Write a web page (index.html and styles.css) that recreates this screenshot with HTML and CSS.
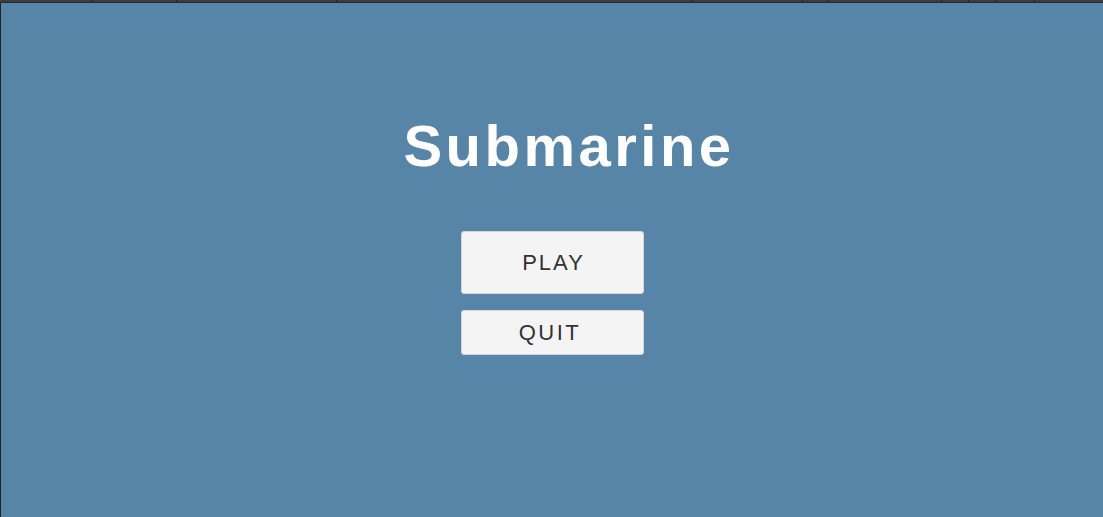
FILE: index.html
```html
<!DOCTYPE html>
<html lang="en">
<head>
<meta charset="utf-8">
<title>Submarine</title>
<link rel="stylesheet" href="styles.css">
</head>
<body>
<div class="toolbar">
  <span class="seg" style="width:92px"></span>
  <span class="seg" style="width:85px"></span>
  <span class="seg" style="width:160px"></span>
  <span class="seg" style="width:355px"></span>
  <span class="seg" style="width:111px"></span>
  <span class="seg" style="width:26px"></span>
  <span class="seg" style="width:113px"></span>
  <span class="seg" style="width:27px"></span>
  <span class="seg" style="width:27px"></span>
  <span class="seg" style="width:39px"></span>
  <span class="seg seg-last"></span>
</div>
<div class="viewport">
  <div class="edge"></div>
  <main class="menu">
    <h1 class="title">Submarine</h1>
    <div class="buttons">
      <button class="btn btn-play">PLAY</button>
      <button class="btn btn-quit">QUIT</button>
    </div>
  </main>
</div>
</body>
</html>
```

FILE: styles.css
```css
html, body {
  margin: 0;
  padding: 0;
  height: 100%;
}
body {
  background: #5785a8;
  font-family: "Liberation Sans", Arial, sans-serif;
  overflow: hidden;
  display: flex;
  flex-direction: column;
}
.toolbar {
  display: flex;
  height: 2px;
  background: #3c3c3c;
  border-bottom: 1px solid #2b2b2b;
  flex: none;
}
.seg {
  box-sizing: border-box;
  height: 100%;
  border-right: 1px solid #232323;
  flex: none;
}
.seg-last {
  flex: 1;
  border-right: none;
}
.viewport {
  flex: 1;
  display: flex;
}
.edge {
  width: 1px;
  background: #232323;
  flex: none;
}
.menu {
  flex: 1;
  display: flex;
  flex-direction: column;
  align-items: center;
  padding-top: 114px;
}
.title {
  margin: 0;
  color: #ffffff;
  font-size: 58px;
  line-height: 58px;
  font-weight: bold;
  letter-spacing: 3.5px;
  padding-left: 34px;
}
.buttons {
  margin-top: 56px;
  display: flex;
  flex-direction: column;
  gap: 16px;
}
.btn {
  width: 183px;
  box-sizing: border-box;
  background: #f4f4f4;
  border: 1px solid #d6d6d6;
  border-radius: 3px;
  color: #323232;
  font-family: "Liberation Sans", Arial, sans-serif;
  font-size: 22px;
  letter-spacing: 2px;
  padding: 0;
}
.btn-play {
  height: 63px;
  padding-left: 3px;
}
.btn-quit {
  height: 45px;
  letter-spacing: 2.5px;
  padding-right: 4px;
}
```
